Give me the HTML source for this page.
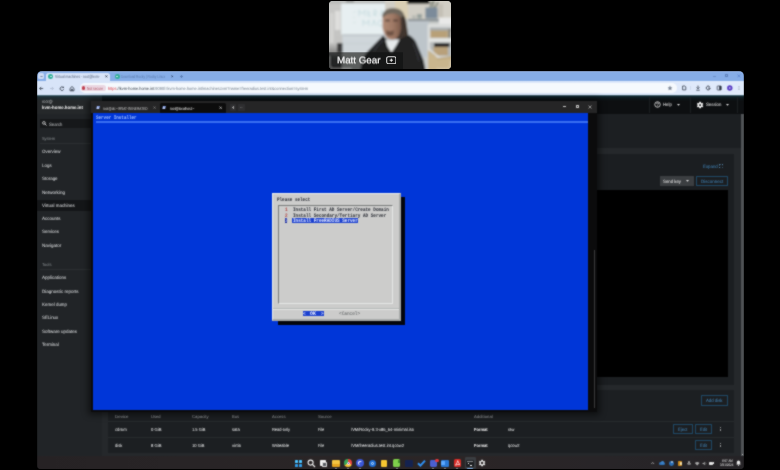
<!DOCTYPE html>
<html>
<head>
<meta charset="utf-8">
<title>Screen share</title>
<style>
*{box-sizing:border-box;margin:0;padding:0}
html,body{text-rendering:geometricPrecision;width:780px;height:470px;overflow:hidden;background:#000;font-family:"Liberation Sans",sans-serif}
.a{position:absolute}
.t{position:absolute;white-space:nowrap;line-height:1;transform-origin:0 0;color:#e8e8e8;font-size:45px}
.m{font-family:"Liberation Mono",monospace}
.b{font-weight:bold}
#stage{position:absolute;left:0;top:0;width:780px;height:470px;overflow:hidden;background:#000}
#scr{left:37px;top:71px;width:707px;height:398px;border-radius:5px 5px 4px 4px;overflow:hidden;background:#1b1e20}
#scr .in{position:absolute;left:-37px;top:-71px;width:780px;height:470px;filter:url(#soft)}
</style>
</head>
<body>
<div id="stage">
<svg width="0" height="0" style="position:absolute"><defs><filter id="soft" x="0" y="0" width="100%" height="100%" color-interpolation-filters="sRGB"><feConvolveMatrix order="3" kernelMatrix="1 2 1 2 11 2 1 2 1" divisor="23" edgeMode="duplicate" preserveAlpha="true"/></filter></defs></svg>
<div class="a" id="cam" style="left:329px;top:1px;width:122px;height:68.3px;border-radius:4px;overflow:hidden;background:#c9ccca">
<svg width="122" height="68.3" viewBox="0 0 122 68.3" style="position:absolute;left:0;top:0">
<defs><filter id="bl" x="-10%" y="-10%" width="120%" height="120%"><feGaussianBlur stdDeviation="0.9"/></filter>
<linearGradient id="lw" x1="0" y1="0" x2="0" y2="1"><stop offset="0" stop-color="#bdbdbb"/><stop offset="0.1" stop-color="#c8c8c6"/><stop offset="0.6" stop-color="#c4c4c2"/><stop offset="0.72" stop-color="#8a8a88"/><stop offset="0.8" stop-color="#4a4b4b"/><stop offset="1" stop-color="#3a3b3b"/></linearGradient>
<linearGradient id="fc" x1="0" y1="0" x2="1" y2="0"><stop offset="0" stop-color="#b08a74"/><stop offset="0.55" stop-color="#a07a66"/><stop offset="1" stop-color="#7a5a4a"/></linearGradient>
</defs>
<g filter="url(#bl)">
<rect x="-3" y="-3" width="128" height="75" fill="#c9ccca"/>
<rect x="-3" y="-3" width="16" height="75" fill="url(#lw)"/>
<rect x="6" y="10" width="5.4" height="19" fill="#dededc"/>
<rect x="1" y="12" width="3.5" height="30" fill="#d4d4d2"/>
<rect x="8" y="42" width="7" height="10" fill="#3c3e3e"/>
<rect x="12.2" y="-3" width="44" height="36.5" fill="#e7eff1"/>
<rect x="-3" y="-3" width="60" height="5.5" fill="#b9bbb9"/>
<rect x="17" y="-3" width="8" height="4.5" fill="#8d8f8d"/>
<path d="M30 15v-6l3 4 3-4v6M39 9v6h3M39 12h2.500M45 15v-6q3 0 3 2t-3 2l3 2M51 15l2-6 2 6" fill="none" stroke="#c3d9dd" stroke-width="0.9"/>
<path d="M34 25v-6l3 4 3-4v6M43 25l2-6 2 6M53 20q-3-2-4 1t2 4h2v-2" fill="none" stroke="#c3d9dd" stroke-width="0.9"/>
<path d="M24 12l3-2M24 22l3-1M24 16l2 1" fill="none" stroke="#d0e0e2" stroke-width="0.8"/>
<rect x="13.500" y="33" width="70" height="19" fill="#cfd6da"/>
<rect x="13.500" y="33.700" width="70" height="0.9" fill="#b3babe"/>
<rect x="13.500" y="42.500" width="70" height="0.6" fill="#c2c9cd"/>
<rect x="56" y="-3" width="70" height="22" fill="#d1cec5"/>
<rect x="66" y="-3" width="13" height="20" fill="#dacfb4"/>
<rect x="78.400" y="-3" width="22" height="5.900" fill="#171717"/>
<path d="M101 7l2-7M104 7l1-8M106 7l3-6" stroke="#4c5a48" stroke-width="1.100" fill="none"/>
<rect x="96.400" y="6.600" width="12.100" height="11" rx="0.800" fill="#7b8b9a"/>
<rect x="88" y="13" width="5" height="4.500" fill="#9aa39f"/>
<rect x="83" y="14.500" width="4" height="3" fill="#b4b6b0"/>
<rect x="109" y="3" width="5" height="15" fill="#c4c0b6"/>
<rect x="79" y="18.100" width="46" height="2.300" fill="#878e93"/>
<rect x="79" y="20.100" width="21" height="36" fill="#bdc5ca"/>
<rect x="98.600" y="23.200" width="27" height="48" fill="#dcdedd"/>
<rect x="109.900" y="16.500" width="14" height="6.500" fill="#e9e9e8"/>
<rect x="101" y="26.500" width="22" height="4" fill="#a9adaf"/>
<rect x="101.300" y="29.500" width="17.500" height="7.400" fill="#b8a078"/>
<rect x="119" y="28" width="3" height="9" fill="#8e8a80"/>
<rect x="100" y="37.700" width="24" height="3.400" fill="#e2e4e2"/>
<rect x="101" y="41.100" width="22" height="14" fill="#b4b8b8"/>
<rect x="104.500" y="45.500" width="14.500" height="9" fill="#b8a07a"/>
<rect x="105" y="42" width="15.600" height="3.900" rx="1" fill="#272727"/>
<path d="M99 49l10 8 14-2v16h-24z" fill="#c9b58d"/>
<path d="M100 48l10 8.500" stroke="#e4e4e0" stroke-width="1.600" fill="none"/>
<path d="M108 58l15 -2" stroke="#b09a70" stroke-width="1" fill="none"/>
<!-- long hair behind -->
<path d="M66 9q9 1 11 10l2.500 17q0 5-4 5l-9-3z" fill="#3f362f"/>
<!-- face -->
<path d="M53.500 16q1-7 9-7.500q8 0 9 7l0.500 12q-1 7-5 10.500q-5 2-9-1q-4-5-4.500-10z" fill="url(#fc)"/>
<!-- hair top -->
<path d="M53 15q2-8 11-8q8 0 11 6l-2 4q-4-5-10-4.500q-6 0.500-9 4z" fill="#70685d"/>
<path d="M56 19.500h5M64 19.500h5" stroke="#4e3a30" stroke-width="1.700" fill="none"/>
<path d="M57 29q4 2.500 8 0l-0.500 5q-3.500 2-7 0z" fill="#6f5345"/>
<!-- jacket -->
<path d="M31 71q2-15 8-21l15-15.500 5 5 8 2 7-5 6-2.500q6 3 9 12l5.500 13 2.500 12z" fill="#212223"/>
<path d="M45 50q5-8 10-11M84 42q4 8 6 18" stroke="#34363a" stroke-width="1.500" fill="none"/>
<!-- shirt -->
<path d="M56.500 38.500q6 3 14-0.500l-3 6-5 7.500-4-6z" fill="#e6e9ea"/>
</g>
<rect x="0" y="51.300" width="74" height="17" fill="#0c0d0e" opacity="0.58"/>
<path d="M0.600 55v8.700a4 4 0 0 0 4 4h18" fill="none" stroke="#e2e2e0" stroke-width="1" opacity="0.75" filter="url(#bl)"/>
<path d="M121.400 60v3.700a4 4 0 0 1-4 4h-10" fill="none" stroke="#e8e8e4" stroke-width="0.900" opacity="0.600" filter="url(#bl)"/>
</svg>
<div class="t " style="left:7.60px;top:53.87px;font-size:96.0px;color:#f4f4f4;transform:rotate(0.02deg) scale(0.10169,0.10000);-webkit-text-stroke:2.2px #f4f4f4;will-change:transform;">Matt Gear</div>
<svg class="a" style="left:56.700px;top:55px" width="10.600" height="8.400" viewBox="0 0 10.600 8.400"><rect x="0.700" y="0.700" width="9.200" height="7" rx="1.700" fill="none" stroke="#e0e0e0" stroke-width="1.050"/><path d="M5.300 2.600v3.200M3.700 4.200h3.200" stroke="#f0f0f0" stroke-width="1"/></svg>
</div>
<div class="a" id="scr"><div class="in">
<div class="a" style="left:37px;top:71px;width:707px;height:10px;background:#86ade7;"></div>
<div class="a" style="left:37px;top:71px;width:707px;height:1.2px;background:#9dbbec;"></div>
<div class="a" style="left:37.9px;top:72.9px;width:6.3px;height:6.4px;background:#cfdcf5;border-radius:1.6px"></div>
<div class="a" style="left:46.2px;top:72.6px;width:64.3px;height:8.5px;background:#d8e4f8;border-radius:2.5px 2.5px 0 0"></div>
<div class="a" style="left:37px;top:80.8px;width:707px;height:13.8px;background:linear-gradient(90deg,#d8e4f8 0%,#dae6f9 60%,#e0eafb 100%);"></div>
<div class="a" style="left:79.5px;top:82.7px;width:597.5px;height:10.1px;background:#f5f9fd;border-radius:5px"></div>
<svg class="a" style="left:39.5px;top:74.7px" width="3" height="3" viewBox="0 0 3 3"><path d="M0.5 1l1 1 1-1" fill="none" stroke="#3b4a63" stroke-width="0.7"/></svg>
<div class="a" style="left:48.099999999999994px;top:74.1px;width:5px;height:4.6px;background:#2fae98;border-radius:50%"></div><div class="a" style="left:49.599999999999994px;top:75.6px;width:2px;height:1.7px;background:#d9f3ec;border-radius:50%"></div>
<div class="t " style="left:55.30px;top:73.88px;font-size:44.0px;color:#566379;transform:rotate(0.02deg) scale(0.07733,0.10000);">Virtual machines - root@kvm-</div>
<svg class="a" style="left:104.90px;top:74.90px" width="2.80" height="2.80" viewBox="-1.40 -1.40 2.80 2.80"><path d="M-0.9 -0.9L0.9 0.9M0.9 -0.9L-0.9 0.9" stroke="#2b3445" stroke-width="0.9" fill="none"/></svg>
<div class="a" style="left:114.6px;top:74.1px;width:5px;height:4.6px;background:#2fae98;border-radius:50%"></div><div class="a" style="left:116.1px;top:75.6px;width:2px;height:1.7px;background:#d9f3ec;border-radius:50%"></div>
<div class="t " style="left:121.00px;top:73.88px;font-size:44.0px;color:#5879ab;transform:rotate(0.02deg) scale(0.07264,0.10000);">Download Rocky | Rocky Linux</div>
<svg class="a" style="left:170.60px;top:74.90px" width="2.80" height="2.80" viewBox="-1.40 -1.40 2.80 2.80"><path d="M-0.9 -0.9L0.9 0.9M0.9 -0.9L-0.9 0.9" stroke="#2b3f63" stroke-width="0.9" fill="none"/></svg>
<div class="a" style="left:180.4px;top:76.1px;width:2.6px;height:0.6px;background:#5a7db4;"></div><div class="a" style="left:181.4px;top:75.1px;width:0.6px;height:2.6px;background:#5a7db4;"></div>
<div class="a" style="left:712.5px;top:75.6px;width:3px;height:0.6px;background:#6c8fc9;"></div>
<div class="a" style="left:724.6px;top:74.3px;width:3px;height:3px;border:0.6px solid #5e80ba"></div>
<svg class="a" style="left:736.90px;top:73.90px" width="3.80" height="3.80" viewBox="-1.90 -1.90 3.80 3.80"><path d="M-1.4 -1.4L1.4 1.4M1.4 -1.4L-1.4 1.4" stroke="#4f78c8" stroke-width="0.6" fill="none"/></svg>
<svg class="a" style="left:38.5px;top:84.5px" width="36" height="7" viewBox="0 0 36 7">
<path d="M0.6 3.5h3.6M0.6 3.5l1.6-1.6M0.6 3.5l1.6 1.6" fill="none" stroke="#39414f" stroke-width="0.8"/>
<path d="M11 3.5h3.4M14.4 3.5l-1.5-1.5M14.4 3.5l-1.5 1.5" fill="none" stroke="#aab6cb" stroke-width="0.7"/>
<path d="M24.3 2.6a1.8 1.8 0 1 0 0.3 1.6" fill="none" stroke="#303846" stroke-width="0.8"/>
<path d="M24.9 1.2v1.7h-1.7z" fill="#303846"/>
<path d="M31 3.4l2-1.9 2 1.9v2.4h-4z" fill="none" stroke="#303846" stroke-width="0.8"/>
<rect x="32.3" y="3.8" width="1.4" height="2" fill="#303846"/>
</svg>
<div class="a" style="left:80.8px;top:85.3px;width:25px;height:5.3px;background:#ead7e2;border-radius:2.6px"></div>
<div class="a" style="left:82.1px;top:86.3px;width:3.4px;height:3.4px;background:#c0404f;border-radius:50%"></div>
<div class="t " style="left:87.30px;top:85.68px;font-size:44.0px;color:#b05565;transform:rotate(0.02deg) scale(0.07520,0.10000);">Not secure</div>
<div class="t " style="left:108.40px;top:85.68px;font-size:44.0px;color:#75808d;transform:rotate(0.02deg) scale(0.08923,0.10000);"><span style="color:#d9333f">https</span><span style="color:#333b46">://kvm-home.home.int</span>:9090/=kvm-home.home.int/machines#vm?name=freeradius.test.int&amp;connection=system</div>
<svg class="a" style="left:666px;top:84px" width="76" height="8" viewBox="0 0 76 8">
<path d="M4 1.6l0.75 1.55 1.7 0.25-1.23 1.2 0.3 1.7L4 5.5l-1.52 0.8 0.3-1.7L1.55 3.4l1.7-0.25z" fill="#7d8797"/>
<path d="M16.6 2h2.3l0.9 0.9v3H16.6z" fill="none" stroke="#3a4252" stroke-width="0.8"/>
<rect x="24.3" y="2" width="0.4" height="4" fill="#b7c3d8"/>
<path d="M32 1.6v3M30.6 3.4L32 4.8l1.4-1.4M30.3 6.2h3.4" fill="none" stroke="#2f3747" stroke-width="0.8"/>
<path d="M43.7 2.8a1.9 1.9 0 1 0 0.4 1.3h-1.9" fill="none" stroke="#2a3140" stroke-width="0.9"/>
<rect x="51.2" y="2" width="4" height="4" rx="0.5" fill="none" stroke="#2c3443" stroke-width="0.7"/>
<rect x="53.2" y="2" width="2" height="4" fill="#2c3443"/>
<circle cx="63.8" cy="4" r="2.7" fill="#5b3fc4"/>
<circle cx="63.8" cy="4" r="0.9" fill="#b9a8f0"/>
<circle cx="73" cy="2.3" r="0.42" fill="#4a5363"/><circle cx="73" cy="4" r="0.42" fill="#4a5363"/><circle cx="73" cy="5.7" r="0.42" fill="#4a5363"/>
</svg>
<div class="a" style="left:37px;top:94.5px;width:707px;height:361.5px;background:#1c1f22;"></div>
<div class="a" style="left:37px;top:94.5px;width:707px;height:19px;background:#0d0f11;"></div>
<div class="a" style="left:37px;top:94.5px;width:64.7px;height:19px;background:#25282a;"></div>
<div class="a" style="left:37px;top:113.5px;width:64.7px;height:342.5px;background:#212427;"></div>
<div class="a" style="left:37px;top:94.5px;width:707px;height:6px;background:linear-gradient(rgba(120,170,190,0.75),rgba(20,70,88,0.38) 25%,rgba(10,50,64,0.2) 60%,rgba(10,40,50,0));"></div>
<div class="t " style="left:42.30px;top:98.89px;font-size:45.0px;color:#b4b7b9;transform:rotate(0.02deg) scale(0.08601,0.10000);">root@</div>
<div class="t b" style="left:42.30px;top:105.34px;font-size:48.0px;color:#f4f4f4;transform:rotate(0.02deg) scale(0.09021,0.10000);">kvm-home.home.int</div>
<div class="a" style="left:40.1px;top:119.1px;width:62px;height:9.3px;background:#16181a;"></div>
<svg class="a" style="left:42.3px;top:121.4px" width="5" height="5" viewBox="0 0 5 5"><circle cx="1.9" cy="1.9" r="1.35" fill="none" stroke="#e6e6e6" stroke-width="0.75"/><path d="M2.9 2.9l1.6 1.6" stroke="#e6e6e6" stroke-width="0.85"/></svg>
<div class="t " style="left:48.80px;top:121.54px;font-size:48.0px;color:#c6c9cb;transform:rotate(0.02deg) scale(0.08810,0.10000);">Search</div>
<div class="t " style="left:42.00px;top:136.28px;font-size:44.0px;color:#8d9295;transform:rotate(0.02deg) scale(0.08861,0.10000);">System</div>
<div class="a" style="left:40px;top:143.2px;width:62px;height:0.6px;background:#2b2f31;"></div>
<div class="a" style="left:37px;top:199.8px;width:64.7px;height:11.6px;background:#141618;"></div>
<div class="t " style="left:42.00px;top:149.47px;font-size:47.0px;color:#dfe1e3;transform:rotate(0.02deg) scale(0.09445,0.10000);">Overview</div>
<div class="t " style="left:42.00px;top:162.77px;font-size:47.0px;color:#dfe1e3;transform:rotate(0.02deg) scale(0.09419,0.10000);">Logs</div>
<div class="t " style="left:42.00px;top:176.47px;font-size:47.0px;color:#dfe1e3;transform:rotate(0.02deg) scale(0.09476,0.10000);">Storage</div>
<div class="t " style="left:42.00px;top:189.77px;font-size:47.0px;color:#dfe1e3;transform:rotate(0.02deg) scale(0.09783,0.10000);">Networking</div>
<div class="t " style="left:42.00px;top:202.77px;font-size:47.0px;color:#dfe1e3;transform:rotate(0.02deg) scale(0.09435,0.10000);">Virtual machines</div>
<div class="t " style="left:42.00px;top:216.07px;font-size:47.0px;color:#dfe1e3;transform:rotate(0.02deg) scale(0.09569,0.10000);">Accounts</div>
<div class="t " style="left:42.00px;top:229.47px;font-size:47.0px;color:#dfe1e3;transform:rotate(0.02deg) scale(0.09432,0.10000);">Services</div>
<div class="t " style="left:42.00px;top:242.77px;font-size:47.0px;color:#dfe1e3;transform:rotate(0.02deg) scale(0.09595,0.10000);">Navigator</div>
<div class="t " style="left:42.00px;top:261.88px;font-size:44.0px;color:#8d9295;transform:rotate(0.02deg) scale(0.09151,0.10000);">Tools</div>
<div class="a" style="left:40px;top:269px;width:62px;height:0.6px;background:#2b2f31;"></div>
<div class="t " style="left:42.00px;top:275.27px;font-size:47.0px;color:#dfe1e3;transform:rotate(0.02deg) scale(0.09549,0.10000);">Applications</div>
<div class="t " style="left:42.00px;top:288.77px;font-size:47.0px;color:#dfe1e3;transform:rotate(0.02deg) scale(0.09636,0.10000);">Diagnostic reports</div>
<div class="t " style="left:42.00px;top:302.07px;font-size:47.0px;color:#dfe1e3;transform:rotate(0.02deg) scale(0.09381,0.10000);">Kernel dump</div>
<div class="t " style="left:42.00px;top:315.37px;font-size:47.0px;color:#dfe1e3;transform:rotate(0.02deg) scale(0.09254,0.10000);">SELinux</div>
<div class="t " style="left:42.00px;top:328.77px;font-size:47.0px;color:#dfe1e3;transform:rotate(0.02deg) scale(0.09568,0.10000);">Software updates</div>
<div class="t " style="left:42.00px;top:342.07px;font-size:47.0px;color:#dfe1e3;transform:rotate(0.02deg) scale(0.09459,0.10000);">Terminal</div>
<div class="a" style="left:648.5px;top:96.5px;width:0.6px;height:16px;background:#1b1e21;"></div>
<div class="a" style="left:690px;top:96.5px;width:0.6px;height:16px;background:#1b1e21;"></div>
<div class="a" style="left:737.3px;top:96.5px;width:0.6px;height:16px;background:#1b1e21;"></div>
<svg class="a" style="left:654px;top:101px" width="7" height="7" viewBox="0 0 7 7"><circle cx="3.5" cy="3.5" r="2.75" fill="none" stroke="#e9e9e9" stroke-width="0.8"/><path d="M2.6 2.8a0.9 0.9 0 1 1 1.3 0.8q-0.4 0.2-0.4 0.7" fill="none" stroke="#e9e9e9" stroke-width="0.7"/><circle cx="3.5" cy="5" r="0.4" fill="#e9e9e9"/></svg>
<div class="t " style="left:663.30px;top:102.14px;font-size:48.0px;color:#ececec;transform:rotate(0.02deg) scale(0.08914,0.10000);">Help</div>
<svg class="a" style="left:677.4px;top:103.6px" width="3" height="2" viewBox="0 0 3 2"><path d="M0 0h3L1.5 1.8z" fill="#e4e4e4"/></svg>
<svg class="a" style="left:696.1px;top:100.5px" width="8.2" height="8.2" viewBox="0 0 24 24"><path fill="#f0f0f0" d="M19.14 12.94c.04-.3.06-.61.06-.94 0-.32-.02-.64-.07-.94l2.03-1.58a.49.49 0 0 0 .12-.61l-1.92-3.32a.488.488 0 0 0-.59-.22l-2.39.96c-.5-.38-1.03-.7-1.62-.94l-.36-2.54a.484.484 0 0 0-.48-.41h-3.84c-.24 0-.43.17-.47.41l-.36 2.54c-.59.24-1.13.57-1.62.94l-2.39-.96c-.22-.08-.47 0-.59.22L2.74 8.87c-.12.21-.08.47.12.61l2.03 1.58c-.05.3-.09.63-.09.94s.02.64.07.94l-2.03 1.58a.49.49 0 0 0-.12.61l1.92 3.32c.12.22.37.29.59.22l2.39-.96c.5.38 1.03.7 1.62.94l.36 2.54c.05.24.24.41.48.41h3.84c.24 0 .44-.17.47-.41l.36-2.54c.59-.24 1.13-.56 1.62-.94l2.39.96c.22.08.47 0 .59-.22l1.92-3.32c.12-.22.07-.47-.12-.61l-2.01-1.58zM12 14.8c-1.55 0-2.8-1.25-2.8-2.8s1.250-2.800 2.800-2.800 2.800 1.250 2.800 2.800-1.250 2.800-2.800 2.800z"/></svg>
<div class="t " style="left:706.00px;top:102.14px;font-size:48.0px;color:#ececec;transform:rotate(0.02deg) scale(0.08960,0.10000);">Session</div>
<svg class="a" style="left:726px;top:103.6px" width="3" height="2" viewBox="0 0 3 2"><path d="M0 0h3L1.5 1.8z" fill="#e4e4e4"/></svg>
<div class="a" style="left:101.7px;top:148px;width:639.3px;height:6.3px;background:#25282b;"></div>
<div class="a" style="left:101.7px;top:154.3px;width:639.3px;height:302px;background:#25282b;"></div>
<div class="a" style="left:108px;top:154.3px;width:625.7px;height:230.5px;background:#1b1e21;"></div>
<div class="a" style="left:108px;top:390.3px;width:625.7px;height:62.6px;background:#1c1f22;"></div>
<div class="a" style="left:740.9px;top:114px;width:2.8px;height:342px;background:#4f5255;"></div>
<div class="t " style="left:702.60px;top:163.62px;font-size:47.0px;color:#4289c0;transform:rotate(0.02deg) scale(0.09284,0.10000);">Expand</div>
<svg class="a" style="left:718.8px;top:163.9px" width="4.6" height="4.6" viewBox="0 0 4.6 4.6"><path d="M0.4 1.6V0.4h1.2M3 0.4h1.2v1.2M4.2 3v1.2H3M1.6 4.2H0.4V3" fill="none" stroke="#6fb0e4" stroke-width="0.7"/></svg>
<div class="a" style="left:660.4px;top:176px;width:33.6px;height:10.2px;background:#3b3e41;border-radius:0.6px"></div>
<div class="t " style="left:663.00px;top:178.52px;font-size:47.0px;color:#efefef;transform:rotate(0.02deg) scale(0.09185,0.10000);">Send key</div>
<svg class="a" style="left:685.6px;top:180.3px" width="3" height="2" viewBox="0 0 3 2"><path d="M0 0h3L1.5 1.8z" fill="#e4e4e4"/></svg>
<div class="a" style="left:696px;top:176px;width:31.6px;height:10.2px;border:0.7px solid #1f4966;border-radius:0.6px"></div>
<div class="t " style="left:700.80px;top:178.62px;font-size:47.0px;color:#4289c0;transform:rotate(0.02deg) scale(0.09548,0.10000);">Disconnect</div>
<div class="a" style="left:108px;top:189.6px;width:619.6px;height:187.9px;background:#000;"></div>
<div class="a" style="left:701.3px;top:395.4px;width:26.3px;height:10.2px;border:0.7px solid #1f4966;border-radius:0.6px"></div>
<div class="t " style="left:706.30px;top:398.12px;font-size:47.0px;color:#4289c0;transform:rotate(0.02deg) scale(0.09152,0.10000);">Add disk</div>
<div class="t " style="left:115.00px;top:413.88px;font-size:44.0px;color:#a3a7aa;transform:rotate(0.02deg) scale(0.10037,0.10000);">Device</div>
<div class="t " style="left:150.70px;top:413.88px;font-size:44.0px;color:#a3a7aa;transform:rotate(0.02deg) scale(0.09249,0.10000);">Used</div>
<div class="t " style="left:191.70px;top:413.88px;font-size:44.0px;color:#a3a7aa;transform:rotate(0.02deg) scale(0.09639,0.10000);">Capacity</div>
<div class="t " style="left:232.30px;top:413.88px;font-size:44.0px;color:#a3a7aa;transform:rotate(0.02deg) scale(0.09231,0.10000);">Bus</div>
<div class="t " style="left:272.30px;top:413.88px;font-size:44.0px;color:#a3a7aa;transform:rotate(0.02deg) scale(0.09519,0.10000);">Access</div>
<div class="t " style="left:317.70px;top:413.88px;font-size:44.0px;color:#a3a7aa;transform:rotate(0.02deg) scale(0.09683,0.10000);">Source</div>
<div class="t " style="left:474.30px;top:413.88px;font-size:44.0px;color:#a3a7aa;transform:rotate(0.02deg) scale(0.09676,0.10000);">Additional</div>
<div class="a" style="left:108px;top:421.2px;width:625.7px;height:0.6px;background:#272b2d;"></div>
<div class="a" style="left:108px;top:437.1px;width:625.7px;height:0.6px;background:#272b2d;"></div>
<div class="t " style="left:115.00px;top:426.99px;font-size:45.0px;color:#f0f1f2;transform:rotate(0.02deg) scale(0.09358,0.10000);">cdrom</div>
<div class="t " style="left:150.70px;top:426.99px;font-size:45.0px;color:#f0f1f2;transform:rotate(0.02deg) scale(0.09329,0.10000);">0 GiB</div>
<div class="t " style="left:191.70px;top:426.99px;font-size:45.0px;color:#f0f1f2;transform:rotate(0.02deg) scale(0.08995,0.10000);">1.5 GiB</div>
<div class="t " style="left:232.30px;top:426.99px;font-size:45.0px;color:#f0f1f2;transform:rotate(0.02deg) scale(0.09052,0.10000);">sata</div>
<div class="t " style="left:272.30px;top:426.99px;font-size:45.0px;color:#f0f1f2;transform:rotate(0.02deg) scale(0.08775,0.10000);">Read-only</div>
<div class="t " style="left:317.70px;top:426.99px;font-size:45.0px;color:#f0f1f2;transform:rotate(0.02deg) scale(0.08274,0.10000);">File</div>
<div class="t " style="left:351.00px;top:426.99px;font-size:45.0px;color:#f0f1f2;transform:rotate(0.02deg) scale(0.09029,0.10000);">/VM/Rocky-9.3-x86_64-minimal.iso</div>
<div class="t " style="left:508.30px;top:426.99px;font-size:45.0px;color:#f0f1f2;transform:rotate(0.02deg) scale(0.08688,0.10000);">raw</div>
<div class="t " style="left:115.00px;top:442.79px;font-size:45.0px;color:#f0f1f2;transform:rotate(0.02deg) scale(0.09121,0.10000);">disk</div>
<div class="t " style="left:150.70px;top:442.79px;font-size:45.0px;color:#f0f1f2;transform:rotate(0.02deg) scale(0.09329,0.10000);">8 GiB</div>
<div class="t " style="left:191.70px;top:442.79px;font-size:45.0px;color:#f0f1f2;transform:rotate(0.02deg) scale(0.09086,0.10000);">10 GiB</div>
<div class="t " style="left:232.30px;top:442.79px;font-size:45.0px;color:#f0f1f2;transform:rotate(0.02deg) scale(0.09472,0.10000);">virtio</div>
<div class="t " style="left:272.30px;top:442.79px;font-size:45.0px;color:#f0f1f2;transform:rotate(0.02deg) scale(0.08982,0.10000);">Writeable</div>
<div class="t " style="left:317.70px;top:442.79px;font-size:45.0px;color:#f0f1f2;transform:rotate(0.02deg) scale(0.08274,0.10000);">File</div>
<div class="t " style="left:351.00px;top:442.79px;font-size:45.0px;color:#f0f1f2;transform:rotate(0.02deg) scale(0.09134,0.10000);">/VM/freeradius.test.int.qcow2</div>
<div class="t " style="left:508.30px;top:442.79px;font-size:45.0px;color:#f0f1f2;transform:rotate(0.02deg) scale(0.08841,0.10000);">qcow2</div>
<div class="t b" style="left:474.30px;top:426.99px;font-size:45.0px;color:#f4f4f4;transform:rotate(0.02deg) scale(0.08852,0.10000);">Format</div>
<div class="t b" style="left:474.30px;top:442.79px;font-size:45.0px;color:#f4f4f4;transform:rotate(0.02deg) scale(0.08852,0.10000);">Format</div>
<div class="a" style="left:673.3px;top:423.8px;width:19.5px;height:10.6px;border:0.7px solid #1f4966;border-radius:0.6px"></div><div class="t " style="left:678.30px;top:426.72px;font-size:47.0px;color:#4289c0;transform:rotate(0.02deg) scale(0.09091,0.10000);">Eject</div>
<div class="a" style="left:695.2px;top:423.8px;width:16.6px;height:10.6px;border:0.7px solid #1f4966;border-radius:0.6px"></div><div class="t " style="left:700.00px;top:426.72px;font-size:47.0px;color:#4289c0;transform:rotate(0.02deg) scale(0.08642,0.10000);">Edit</div>
<div class="a" style="left:695.2px;top:439.7px;width:16.6px;height:10.6px;border:0.7px solid #1f4966;border-radius:0.6px"></div><div class="t " style="left:700.00px;top:442.62px;font-size:47.0px;color:#4289c0;transform:rotate(0.02deg) scale(0.08642,0.10000);">Edit</div>
<div class="a" style="left:720.3px;top:427.25px;width:0.9px;height:0.9px;background:#e0e0e0;border-radius:50%"></div>
<div class="a" style="left:720.3px;top:428.85px;width:0.9px;height:0.9px;background:#e0e0e0;border-radius:50%"></div>
<div class="a" style="left:720.3px;top:430.45000000000005px;width:0.9px;height:0.9px;background:#e0e0e0;border-radius:50%"></div>
<div class="a" style="left:720.3px;top:443.15px;width:0.9px;height:0.9px;background:#e0e0e0;border-radius:50%"></div>
<div class="a" style="left:720.3px;top:444.75px;width:0.9px;height:0.9px;background:#e0e0e0;border-radius:50%"></div>
<div class="a" style="left:720.3px;top:446.35px;width:0.9px;height:0.9px;background:#e0e0e0;border-radius:50%"></div>
<div class="a" style="left:741.6px;top:453.6px;width:1.5px;height:1.4px;background:#dcdcdc;border-radius:0.5px"></div>
<div class="a" style="left:88px;top:99px;width:512px;height:316px;background:rgba(0,0,0,0.5);border-radius:3px;filter:blur(3px)"></div>
<div class="a" style="left:91px;top:100.6px;width:505.8px;height:311px;background:#0b0b0c;"></div>
<div class="a" style="left:91px;top:100.6px;width:505.8px;height:12px;background:#252526;"></div>
<div class="a" style="left:160.2px;top:102.8px;width:66.1px;height:9.9px;background:#0c0c0c;border-radius:1.5px 1.5px 0 0"></div>
<svg class="a" style="left:96.2px;top:105.8px" width="4" height="3.5" viewBox="0 0 4.4 4"><path d="M1 0h3.4L3.4 4H0z" fill="#7f9be4"/><path d="M1.2 0.9l1.3 1.1-1.4 1.1M2.3 3.2h1.1" stroke="#fff" stroke-width="0.75" fill="none"/></svg>
<div class="t " style="left:103.30px;top:105.54px;font-size:42.0px;color:#cfcfcf;transform:rotate(0.02deg) scale(0.07610,0.10000);">root@dc:~/RSAT-GENERATED</div>
<svg class="a" style="left:152.60px;top:106.10px" width="3.20" height="3.20" viewBox="-1.60 -1.60 3.20 3.20"><path d="M-1.1 -1.1L1.1 1.1M1.1 -1.1L-1.1 1.1" stroke="#9a9a9a" stroke-width="0.55" fill="none"/></svg>
<svg class="a" style="left:162.3px;top:105.8px" width="4" height="3.5" viewBox="0 0 4.4 4"><path d="M1 0h3.4L3.4 4H0z" fill="#7f9be4"/><path d="M1.2 0.9l1.3 1.1-1.4 1.1M2.3 3.2h1.1" stroke="#fff" stroke-width="0.75" fill="none"/></svg>
<div class="t " style="left:169.50px;top:105.54px;font-size:42.0px;color:#f0f0f0;transform:rotate(0.02deg) scale(0.07698,0.10000);">root@localhost:~</div>
<svg class="a" style="left:219.10px;top:105.90px" width="3.40" height="3.40" viewBox="-1.70 -1.70 3.40 3.40"><path d="M-1.2 -1.2L1.2 1.2M1.2 -1.2L-1.2 1.2" stroke="#e6e6e6" stroke-width="0.6" fill="none"/></svg>
<div class="a" style="left:229.7px;top:104.2px;width:6.5px;height:6.5px;background:#2e2e30;border-radius:1px"></div>
<div class="a" style="left:238.2px;top:104.2px;width:6.5px;height:6.5px;background:#2e2e30;border-radius:1px"></div>
<div class="a" style="left:231.7px;top:107.2px;width:2.6px;height:0.5px;background:#9a9a9a;"></div><div class="a" style="left:232.75px;top:106.15px;width:0.5px;height:2.6px;background:#9a9a9a;"></div>
<svg class="a" style="left:240.3px;top:106.8px" width="2.4" height="1.6" viewBox="0 0 2.4 1.6"><path d="M0.2 0.2l1 1 1-1" fill="none" stroke="#9a9a9a" stroke-width="0.5"/></svg>
<div class="a" style="left:563.4px;top:106.4px;width:3px;height:0.6px;background:#c4c4c4;"></div>
<div class="a" style="left:575.6px;top:105px;width:3.2px;height:3.2px;border:0.6px solid #c4c4c4"></div>
<svg class="a" style="left:588.10px;top:104.70px" width="4.00" height="4.00" viewBox="-2.00 -2.00 4.00 4.00"><path d="M-1.5 -1.5L1.5 1.5M1.5 -1.5L-1.5 1.5" stroke="#cfcfcf" stroke-width="0.6" fill="none"/></svg>
<div class="a" style="left:93px;top:112.7px;width:495px;height:297px;background:#0036d8;"></div>
<div class="t m b" style="left:96.00px;top:114.58px;font-size:43.0px;color:#a4c2ff;transform:rotate(0.02deg) scale(0.09833,0.12200);">Server Installer</div>
<div class="a" style="left:96px;top:121.4px;width:491.6px;height:1.25px;background:#3a70f2;"></div>
<div class="a" style="left:593.6px;top:250px;width:1px;height:158px;background:#3a3a3c;"></div>
<div class="a" style="left:277.5px;top:197.4px;width:127.9px;height:127.8px;background:#04060c;"></div>
<div class="a" style="left:272px;top:192.7px;width:129.2px;height:128.1px;background:#cccccb;"></div>
<div class="a" style="left:272px;top:192.7px;width:129.2px;height:128.1px;border-left:1.3px solid #eceeed;border-top:1.1px solid #eceeed;border-right:2px solid #a6a9a8;border-bottom:2.2px solid #a6a9a8"></div>
<div class="t m b" style="left:277.00px;top:196.98px;font-size:43.0px;color:#2d3038;transform:rotate(0.02deg) scale(0.09926,0.12200);">Please select</div>
<div class="a" style="left:278px;top:204.6px;width:115.3px;height:99.1px;border-left:0.9px solid #7b7e7d;border-top:0.9px solid #7b7e7d;border-right:0.8px solid #e4e6e5;border-bottom:0.8px solid #e4e6e5"></div>
<div class="t m b" style="left:285.40px;top:207.48px;font-size:43.0px;color:#b0413e;transform:rotate(0.02deg) scale(0.10034,0.12200);">1</div>
<div class="t m b" style="left:285.40px;top:212.68px;font-size:43.0px;color:#b0413e;transform:rotate(0.02deg) scale(0.10034,0.12200);">2</div>
<div class="t m b" style="left:292.80px;top:207.48px;font-size:43.0px;color:#2d3038;transform:rotate(0.02deg) scale(0.10037,0.12200);">Install First AD Server/Create Domain</div>
<div class="t m b" style="left:292.80px;top:212.68px;font-size:43.0px;color:#2d3038;transform:rotate(0.02deg) scale(0.10037,0.12200);">Install Secondary/Tertiary AD Server</div>
<div class="a" style="left:284.9px;top:218.4px;width:2.6px;height:4.5px;background:#22309a;"></div>
<div class="a" style="left:292.2px;top:217.9px;width:65.6px;height:5.1px;background:#1c41cf;"></div>
<div class="t m b" style="left:285.40px;top:217.98px;font-size:43.0px;color:#7f8fe0;transform:rotate(0.02deg) scale(0.10034,0.12200);">3</div>
<div class="t m b" style="left:292.80px;top:217.98px;font-size:43.0px;color:#e8ecff;transform:rotate(0.02deg) scale(0.10037,0.12200);">Install FreeRADIUS Server</div>
<div class="a" style="left:273.2px;top:308.0px;width:126px;height:0.5px;background:#b6b9b8;"></div>
<div class="a" style="left:273.2px;top:308.5px;width:126px;height:0.6px;background:#e2e4e3;"></div>
<div class="a" style="left:302.8px;top:310.9px;width:21px;height:5.4px;background:#1c41cf;"></div>
<div class="t m b" style="left:303.20px;top:311.24px;font-size:43.0px;color:#d0d8ff;transform:rotate(0.02deg) scale(0.10034,0.12000);">&lt;</div>
<div class="t m b" style="left:310.40px;top:311.34px;font-size:43.0px;color:#f4f6ff;transform:rotate(0.02deg) scale(0.11200,0.12000);">OK</div>
<div class="t m b" style="left:320.70px;top:311.24px;font-size:43.0px;color:#d0d8ff;transform:rotate(0.02deg) scale(0.10034,0.12000);">&gt;</div>
<div class="t m" style="left:339.00px;top:311.24px;font-size:43.0px;color:#55585a;transform:rotate(0.02deg) scale(0.10231,0.12000);">&lt;Cancel&gt;</div>
<div class="a" style="left:37px;top:455.8px;width:707px;height:14px;background:linear-gradient(90deg,#262224 0%,#282426 20%,#2a2526 45%,#2b2526 60%,#282528 80%,#252326 100%);"></div>
<div class="a" style="left:294.6px;top:459.5px;width:3.5px;height:3.5px;background:#4cc2ff;border-radius:0.5px"></div>
<div class="a" style="left:298.6px;top:459.5px;width:3.5px;height:3.5px;background:#4cc2ff;border-radius:0.5px"></div>
<div class="a" style="left:294.6px;top:463.5px;width:3.5px;height:3.5px;background:#2f9be8;border-radius:0.5px"></div>
<div class="a" style="left:298.6px;top:463.5px;width:3.5px;height:3.5px;background:#2f9be8;border-radius:0.5px"></div>
<svg class="a" style="left:306.8px;top:459.3px" width="9" height="9" viewBox="0 0 9 9"><circle cx="3.6" cy="3.6" r="2.5" fill="none" stroke="#f2f2f2" stroke-width="1.1"/><path d="M5.4 5.4l2.6 2.6" stroke="#f2f2f2" stroke-width="1.2"/></svg>
<div class="a" style="left:320px;top:460px;width:5.5px;height:5.5px;background:#f0f0f0;border-radius:0.8px"></div>
<div class="a" style="left:322px;top:461.6px;width:5px;height:5px;background:#5a5d62;border-radius:0.8px;border:0.6px solid #dcdcdc"></div>
<div class="a" style="left:331.7px;top:460.1px;width:8px;height:6.4px;background:#f4c542;border-radius:1px"></div>
<div class="a" style="left:331.7px;top:463.6px;width:8px;height:3px;background:#e6a520;border-radius:0 0 1px 1px"></div>
<div class="a" style="left:344.3px;top:459.3px;width:8px;height:8px;border-radius:50%;background:conic-gradient(#e8453c 0 33%,#f6c433 33% 66%,#3aa757 66% 100%)"></div>
<div class="a" style="left:346.5px;top:461.5px;width:3.6px;height:3.6px;background:#7b4fd6;border-radius:50%;border:0.7px solid #fff"></div>
<div class="a" style="left:356px;top:459.3px;width:8px;height:8px;background:#3a57d8;border-radius:50%"></div>
<div class="a" style="left:357.8px;top:461.1px;width:4.4px;height:4.4px;background:#fff;border-radius:50%"></div>
<div class="a" style="left:359.4px;top:462.2px;width:3.2px;height:2.4px;background:#3a57d8;border-radius:50%"></div>
<div class="a" style="left:368.6px;top:459.6px;width:7.4px;height:7.4px;background:#1f6fd6;border-radius:50%"></div>
<div class="a" style="left:370.6px;top:461.6px;width:3.4px;height:3.4px;background:#1f6fd6;border-radius:50%;border:0.8px solid #cfe6ff"></div>
<div class="a" style="left:381.2px;top:459.5px;width:5.6px;height:7.6px;background:#f7c731;border-radius:1px"></div>
<div class="a" style="left:393.0px;top:459.40000000000003px;width:7.4px;height:7.8px;background:#7ed04b;border-radius:1.6px"></div>
<div class="a" style="left:397.5px;top:460.2px;width:2.4px;height:2.4px;background:#3f8f2a;border-radius:0.6px"></div>
<div class="a" style="left:405.0px;top:459.8px;width:8px;height:7px;background:#14224f;border-radius:1px"></div>
<svg class="a" style="left:416.6px;top:459.4px" width="9" height="8" viewBox="0 0 9 8"><path d="M1 4.2l2.4 2.4L8 1.6" fill="none" stroke="#2f8ff0" stroke-width="2"/></svg>
<div class="a" style="left:429.5px;top:460.0px;width:7.6px;height:6.6px;background:#4b5fd0;border-radius:1.4px"></div>
<div class="a" style="left:435px;top:458.8px;width:3.6px;height:3.6px;background:#e5383b;border-radius:50%"></div>
<div class="a" style="left:441.0px;top:460.0px;width:8px;height:6.6px;background:#2a78d6;border-radius:1px"></div>
<div class="a" style="left:441px;top:461px;width:3.6px;height:4.4px;background:#5aa7ff;border-radius:0.5px"></div>
<div class="a" style="left:453.6px;top:459.40000000000003px;width:7.4px;height:7.8px;background:#d92b26;border-radius:1.5px"></div>
<svg class="a" style="left:454.6px;top:460.4px" width="5.4" height="5.8" viewBox="0 0 5.4 5.8"><path d="M2.7 0.6Q3.4 3 5 4.6Q2.7 4 0.5 5.2Q2.3 3 2.7 0.6z" fill="none" stroke="#fff" stroke-width="0.7"/></svg>
<div class="a" style="left:464.5px;top:457.2px;width:11px;height:12px;background:#3a3d41;border-radius:1.2px"></div>
<div class="a" style="left:466.2px;top:460.0px;width:7.6px;height:6.6px;background:#1d1f22;border-radius:1px"></div>
<div class="a" style="left:467px;top:461px;width:6px;height:1.3px;background:#8a8d90;"></div>
<div class="a" style="left:467.6px;top:463px;width:1.6px;height:0.7px;background:#fff;"></div>
<div class="a" style="left:469.8px;top:464.6px;width:2.2px;height:0.7px;background:#fff;"></div>
<svg class="a" style="left:477.6px;top:459.2px" width="8.2" height="8.2" viewBox="0 0 24 24"><path fill="#e8e8e8" d="M19.14 12.94c.04-.3.06-.61.06-.94 0-.32-.02-.64-.07-.94l2.03-1.58a.49.49 0 0 0 .12-.61l-1.92-3.32a.488.488 0 0 0-.59-.22l-2.39.96c-.5-.38-1.03-.7-1.62-.94l-.36-2.54a.484.484 0 0 0-.48-.41h-3.84c-.24 0-.43.17-.47.41l-.36 2.54c-.59.24-1.13.57-1.62.94l-2.39-.96c-.22-.08-.47 0-.59.22L2.74 8.87c-.12.21-.08.47.12.61l2.03 1.58c-.05.3-.09.63-.09.94s.02.64.07.94l-2.03 1.58a.49.49 0 0 0-.12.61l1.92 3.32c.12.22.37.29.59.22l2.39-.96c.5.38 1.03.7 1.62.94l.36 2.54c.05.24.24.41.48.41h3.84c.24 0 .44-.17.47-.41l.36-2.54c.59-.24 1.13-.56 1.62-.94l2.39.96c.22.08.47 0 .59-.22l1.92-3.32c.12-.22.07-.47-.12-.61l-2.01-1.58zM12 15.600c-1.980 0-3.600-1.620-3.600-3.600s1.620-3.600 3.600-3.600 3.600 1.620 3.600 3.600-1.620 3.600-3.600 3.600z"/></svg>
<div class="a" style="left:334.7px;top:468px;width:2px;height:0.7px;background:#9aa0a6;border-radius:0.4px"></div>
<div class="a" style="left:347.3px;top:468px;width:2px;height:0.7px;background:#9aa0a6;border-radius:0.4px"></div>
<div class="a" style="left:359px;top:468px;width:2px;height:0.7px;background:#9aa0a6;border-radius:0.4px"></div>
<div class="a" style="left:395.7px;top:468px;width:2px;height:0.7px;background:#9aa0a6;border-radius:0.4px"></div>
<div class="a" style="left:432.3px;top:468px;width:2px;height:0.7px;background:#9aa0a6;border-radius:0.4px"></div>
<div class="a" style="left:444px;top:468px;width:2px;height:0.7px;background:#9aa0a6;border-radius:0.4px"></div>
<div class="a" style="left:456.3px;top:468px;width:2px;height:0.7px;background:#9aa0a6;border-radius:0.4px"></div>
<div class="a" style="left:467px;top:468px;width:6px;height:0.8px;background:#7fb6f5;border-radius:0.4px"></div>
<svg class="a" style="left:651.3px;top:462px" width="3.4" height="2.4" viewBox="0 0 3.4 2.4"><path d="M0.3 2l1.4-1.5L3.1 2" fill="none" stroke="#dedede" stroke-width="0.6"/></svg>
<div class="a" style="left:659px;top:462px;width:5.8px;height:3.2px;background:#2f72b8;border-radius:1.6px"></div>
<div class="a" style="left:660.8px;top:461px;width:3px;height:2.6px;background:#3d82c6;border-radius:50%"></div>
<div class="a" style="left:669px;top:460.8px;width:4.8px;height:4.8px;background:#2a6fb8;border-radius:50%"></div>
<div class="a" style="left:670.6px;top:460.6px;width:2.6px;height:2.6px;background:#aac4de;border-radius:50%"></div>
<div class="a" style="left:677.7px;top:460.6px;width:4.6px;height:5.4px;background:#c8881c;border-radius:0.8px"></div>
<div class="a" style="left:680px;top:462.4px;width:1.8px;height:2.4px;background:#f4e2b0;border-radius:0.4px"></div>
<div class="a" style="left:688.3px;top:460.8px;width:1.5px;height:3.2px;background:#9a9a9a;border-radius:0.8px"></div>
<div class="a" style="left:687.2px;top:463px;width:3.8px;height:2px;background:transparent;border:0.5px solid #8a8a8a;border-top:none;border-radius:0 0 2px 2px"></div>
<svg class="a" style="left:694.4px;top:460.6px" width="6.4" height="5" viewBox="0 0 6.4 5"><path d="M0.8 2Q3.2 -0.2 5.600 2L3.2 4.5z" fill="#a8a8a8"/></svg>
<svg class="a" style="left:701.6px;top:460.8px" width="5.4" height="5" viewBox="0 0 5.4 5"><path d="M0.5 1.9h1L2.800 0.8v3.400L1.500 3.100H0.500z" fill="#a8a8a8"/><path d="M3.600 1.500q0.800 1 0 2" fill="none" stroke="#a8a8a8" stroke-width="0.5"/></svg>
<div class="a" style="left:708.6px;top:461.6px;width:4.8px;height:3.1px;background:#e4e4e4;border-radius:0.8px"></div>
<div class="a" style="left:713.4px;top:462.4px;width:0.6px;height:1.4px;background:#e4e4e4;"></div>
<div class="t " style="left:722.30px;top:458.77px;font-size:37.0px;color:#f2f2f2;transform:rotate(0.02deg) scale(0.07955,0.10000);">8:57 AM</div>
<div class="t " style="left:719.60px;top:463.47px;font-size:37.0px;color:#f2f2f2;transform:rotate(0.02deg) scale(0.08201,0.10000);">3/31/2024</div>
<svg class="a" style="left:735.7px;top:460.3px" width="5" height="6" viewBox="0 0 5 6"><path d="M2.5 0.4a1.7 1.7 0 0 1 1.7 1.7v1.7l0.5 0.8H0.3l0.5-0.8V2.1A1.700 1.700 0 0 1 2.500 0.400z" fill="#e8e8e8"/><circle cx="2.5" cy="5.2" r="0.6" fill="#e8e8e8"/></svg>
</div></div>
</div>
</body>
</html>
